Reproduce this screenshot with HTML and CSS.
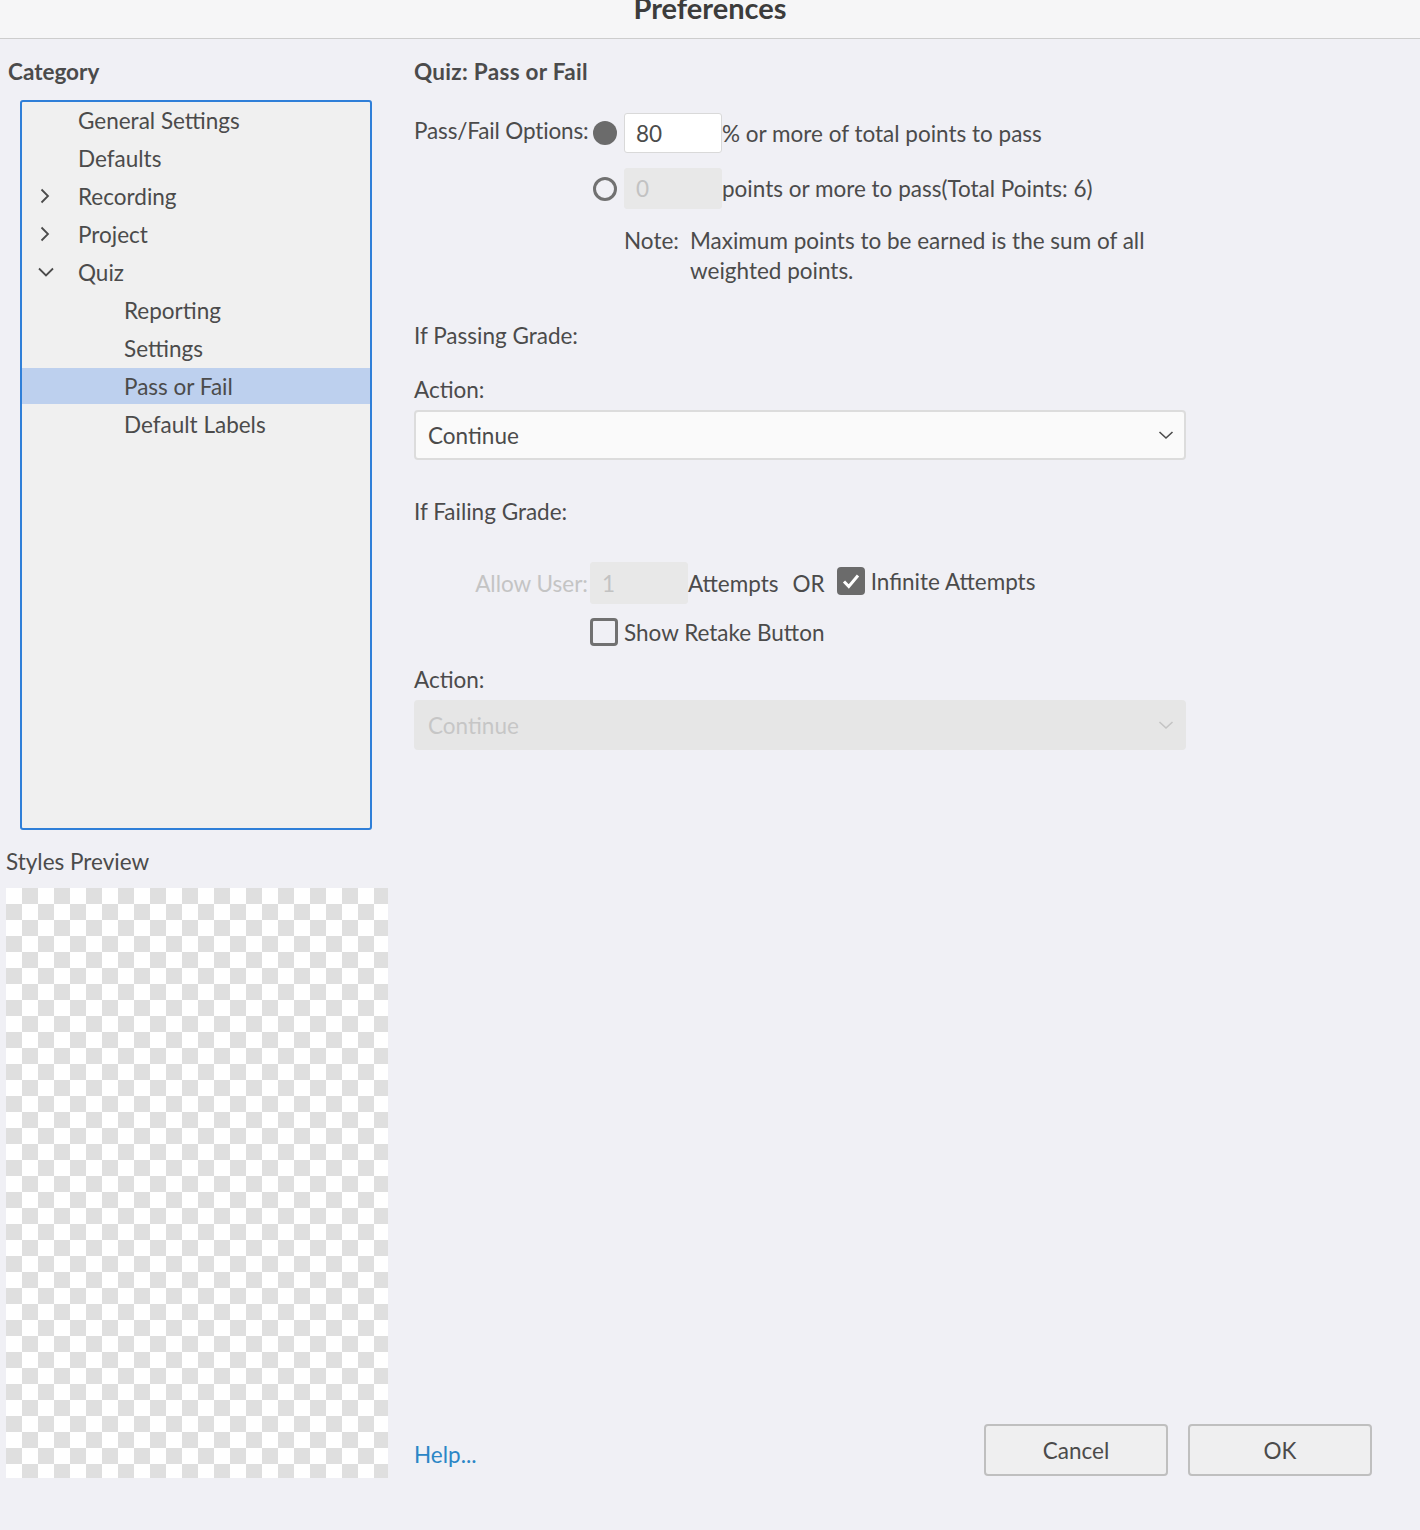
FILE: index.html
```html
<!DOCTYPE html>
<html>
<head>
<meta charset="utf-8">
<link rel="stylesheet" href="styles.css">
</head>
<body>
<div class="titlebar"><span class="title">Preferences</span></div>
<div class="main">
  <div class="left">
    <div class="cat-label">Category</div>
    <div class="tree">
      <div class="row l1">General Settings</div>
      <div class="row l1">Defaults</div>
      <div class="row"><span class="chev"><svg width="16" height="16" viewBox="0 0 16 16"><path d="M3.5 1.5 L10 8 L3.5 14.5" fill="none" stroke="#4b4b4b" stroke-width="1.8"/></svg></span>Recording</div>
      <div class="row"><span class="chev"><svg width="16" height="16" viewBox="0 0 16 16"><path d="M3.5 1.5 L10 8 L3.5 14.5" fill="none" stroke="#4b4b4b" stroke-width="1.8"/></svg></span>Project</div>
      <div class="row"><span class="chev"><svg width="16" height="16" viewBox="0 0 16 16"><path d="M1 4.5 L8 11.5 L15 4.5" fill="none" stroke="#4b4b4b" stroke-width="1.8"/></svg></span>Quiz</div>
      <div class="row l2">Reporting</div>
      <div class="row l2">Settings</div>
      <div class="row l2 sel">Pass or Fail</div>
      <div class="row l2">Default Labels</div>
    </div>
    <div class="sp-label">Styles Preview</div>
    <div class="checker"></div>
  </div>
  <div class="right">
    <div class="sect-title">Quiz: Pass or Fail</div>
    <div class="opt opt1">
      <div class="lblcol tight">Pass/Fail Options:</div>
      <span class="radio on"></span>
      <div class="field">80</div>
      <span class="txt">% or more of total points to pass</span>
    </div>
    <div class="opt opt2">
      <div class="lblcol"></div>
      <span class="radio off"></span>
      <div class="field dis">0</div>
      <span class="txt">points or more to pass(Total Points: 6)</span>
    </div>
    <div class="note">
      <span class="note-lbl">Note:</span>
      <span class="note-txt">Maximum points to be earned is the sum of all<br>weighted points.</span>
    </div>
    <div class="label pass-lbl">If Passing Grade:</div>
    <div class="label action-lbl">Action:</div>
    <div class="select">
      <span>Continue</span>
      <svg width="16" height="10" viewBox="0 0 16 10"><path d="M1.5 2 L8 8 L14.5 2" fill="none" stroke="#4b4b4b" stroke-width="1.6"/></svg>
    </div>
    <div class="label fail-lbl">If Failing Grade:</div>
    <div class="opt attempts">
      <div class="lblcol disabled-txt">Allow User:</div>
      <div class="field dis tall">1</div>
      <span class="txt">Attempts</span>
      <span class="txt or">OR</span>
      <span class="checkbox checked"><svg width="28" height="28" viewBox="0 0 28 28"><path d="M7 14.5 L11.8 19.5 L21 8.5" fill="none" stroke="#fff" stroke-width="3"/></svg></span>
      <span class="txt cb-txt">Infinite Attempts</span>
    </div>
    <div class="opt retake">
      <span class="checkbox"></span>
      <span class="txt cb-txt">Show Retake Button</span>
    </div>
    <div class="label action2-lbl">Action:</div>
    <div class="select disabled">
      <span>Continue</span>
      <svg width="16" height="10" viewBox="0 0 16 10"><path d="M1.5 2 L8 8 L14.5 2" fill="none" stroke="#c4c4c4" stroke-width="1.6"/></svg>
    </div>
    <div class="footer">
      <span class="help">Help...</span>
      <div class="buttons">
        <button class="btn">Cancel</button>
        <button class="btn">OK</button>
      </div>
    </div>
  </div>
</div>
</body>
</html>
```
FILE: styles.css
```css
* { box-sizing: border-box; }
html, body { margin: 0; padding: 0; }
body {
  background: #f0f0f5;
  font-family: Lato, "Open Sans", sans-serif;
  font-size: 22.5px;
  color: #4b4b4b;
  width: 1420px;
  height: 1530px;
  overflow: hidden;
}
.titlebar {
  height: 39px;
  background: #f6f6f7;
  border-bottom: 1px solid #cdcdcd;
  display: flex;
  justify-content: center;
  align-items: flex-start;
  overflow: hidden;
}
.title {
  font-weight: 700;
  font-size: 29px;
  line-height: 29px;
  margin-top: -7px;
  color: #3c3c3c;
}
.main { display: flex; height: 1491px; }
.left { width: 414px; flex: none; }
.cat-label {
  margin: 18px 0 0 8px;
  line-height: 30px;
  font-weight: 700;
}
.tree {
  margin: 13px 0 0 20px;
  width: 352px;
  height: 730px;
  border: 2px solid #2f7fd8;
  border-radius: 3px;
  background: #f0f0f0;
  display: flex;
  flex-direction: column;
  gap: 2px;
}
.row {
  height: 36px;
  flex: none;
  display: flex;
  align-items: center;
  padding-left: 16px;
  white-space: nowrap;
}
.row.l1 { padding-left: 56px; }
.row.l2 { padding-left: 102px; }
.row.sel { background: #bdd0ee; }
.chev { width: 40px; display: flex; align-items: center; }
.sp-label { margin: 17px 0 0 6px; line-height: 30px; }
.checker {
  margin: 11px 0 0 6px;
  width: 382px;
  height: 590px;
  background: repeating-conic-gradient(#dfdfdf 0 25%, #ffffff 0 50%) 0 0 / 32px 32px;
}
.right { flex: 1; display: flex; flex-direction: column; }
.sect-title { margin-top: 18px; line-height: 30px; font-weight: 700; letter-spacing: 0.3px; }
.label { line-height: 30px; }
.opt { display: flex; align-items: center; white-space: nowrap; }
.opt1 { margin-top: 26px; height: 40px; }
.opt2 { margin-top: 15px; height: 41px; }
.lblcol { width: 176px; flex: none; text-align: right; padding-right: 2px; }
.lblcol.tight { letter-spacing: -0.15px; padding-bottom: 5px; }
.radio { width: 24px; height: 24px; border-radius: 50%; margin-left: 3px; flex: none; }
.radio.on { background: #6b6b6b; }
.radio.off { border: 3px solid #717171; }
.field {
  margin-left: 7px;
  width: 98px;
  height: 100%;
  border: 1px solid #d9d9d9;
  border-radius: 3px;
  background: #ffffff;
  padding-left: 11px;
  display: flex;
  align-items: center;
  flex: none;
}
.field.dis { background: #e8e8e8; border-color: #e8e8e8; color: #c2c2c2; }
.field.tall { margin-left: 0; }
.note { display: flex; margin: 17px 0 0 210px; line-height: 30px; }
.note-lbl { width: 66px; flex: none; }
.pass-lbl { margin-top: 35px; }
.action-lbl { margin-top: 24px; }
.select {
  margin-top: 5px;
  width: 772px;
  height: 50px;
  flex: none;
  border: 2px solid #dcdcdc;
  border-radius: 4px;
  background: #fafafa;
  display: flex;
  align-items: center;
  justify-content: space-between;
  padding: 0 10px 0 12px;
}
.select.disabled { background: #e6e6e6; border-color: #e6e6e6; color: #c6c6c6; }
.fail-lbl { margin-top: 37px; }
.attempts { margin-top: 35px; height: 42px; }
.disabled-txt { color: #c4c4c4; }
.or { margin-left: 14px; }
.checkbox {
  width: 28px;
  height: 28px;
  flex: none;
  border: 3px solid #717171;
  border-radius: 4px;
  margin-left: 12px;
}
.checkbox.checked { background: #6b6b6b; border: none; margin-top: -4px; }
.cb-txt { margin-left: 6px; }
.attempts .cb-txt { margin-top: -4px; }
.retake { margin-top: 13px; height: 30px; padding-left: 176px; }
.retake .checkbox { margin-left: 0; }
.action2-lbl { margin-top: 18px; }
.footer {
  margin-top: auto;
  margin-bottom: 54px;
  height: 52px;
  display: flex;
  align-items: center;
  padding-right: 48px;
}
.help { color: #2b86c6; margin-top: 8px; }
.buttons { margin-left: auto; display: flex; gap: 20px; }
.btn {
  width: 184px;
  height: 52px;
  border: 2px solid #bfbfbf;
  border-radius: 4px;
  background: #efeff0;
  font-family: inherit;
  font-size: 22.5px;
  color: #4b4b4b;
}
```
